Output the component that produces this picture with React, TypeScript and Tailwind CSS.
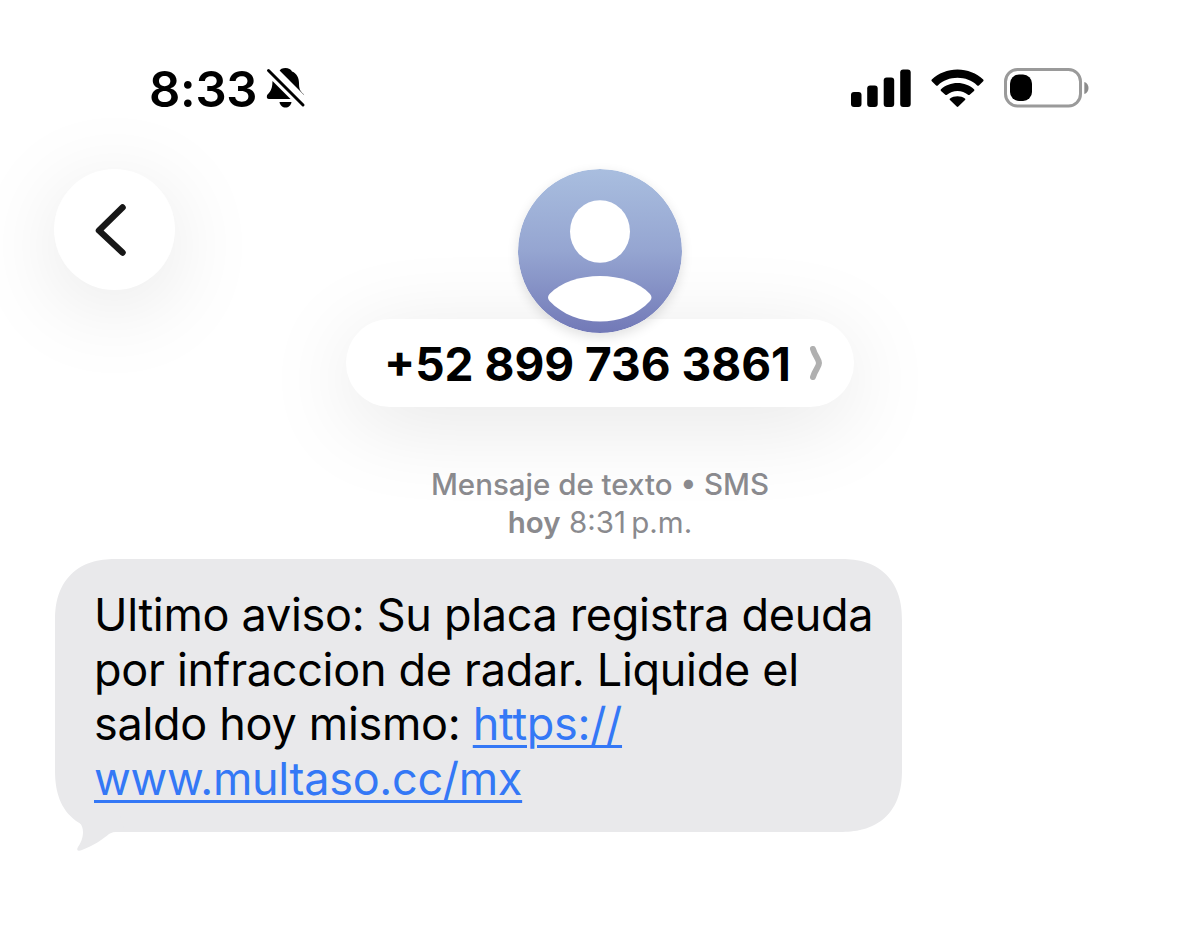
import React from "react";

const SilentIcon: React.FC = () => (
  <svg width="40" height="42" viewBox="0 0 40 42" fill="black">
    <path d="M13 4.5C14 2 16.500 1 19.500 1C22.500 1 25 2.200 26 4.500C31 6.500 33 11 33 16C33 22 34 24 37.500 27L38.500 30L11 2.500Z" />
    <path d="M6.500 14L24.500 32H3C1 32 0.500 30.500 1 28.500C1.500 26.500 6.500 25 6.500 14Z" />
    <path d="M13.500 35H25.500C25 38.500 22.500 40.500 19.500 40.500C16.500 40.500 14 38.500 13.500 35Z" />
    <path d="M10 2L39 31" stroke="white" strokeWidth="3" />
    <path d="M2.500 3.500L37 38" stroke="black" strokeWidth="3" strokeLinecap="round" />
  </svg>
);

const SignalIcon: React.FC = () => (
  <svg width="60" height="38" viewBox="0 0 60 38" fill="black">
    <rect x="0" y="23" width="10.500" height="15" rx="3" />
    <rect x="16.200" y="16.500" width="10.500" height="21.500" rx="3" />
    <rect x="32.700" y="8.500" width="10.500" height="29.500" rx="3" />
    <rect x="49.200" y="0.500" width="10.500" height="37.500" rx="3" />
  </svg>
);

const WifiIcon: React.FC = () => (
  <svg width="53" height="38" viewBox="0 0 53 38" fill="black">
    <path d="M26.500 0.500C36.500 0.500 45.500 4.300 52.200 10.500C52.700 11 52.700 11.700 52.200 12.200L47.900 16.400C47.400 16.900 46.700 16.900 46.200 16.400C40.800 11.500 34 8.800 26.500 8.800C19 8.800 12.200 11.500 6.800 16.400C6.300 16.900 5.600 16.900 5.100 16.400L0.800 12.200C0.300 11.700 0.300 11 0.800 10.500C7.500 4.300 16.500 0.500 26.500 0.500Z" />
    <path d="M26.500 14C32.900 14 38.600 16.300 43 20.200C43.500 20.700 43.500 21.400 43 21.900L38.700 25.800C38.200 26.200 37.500 26.200 37 25.800C34.100 23.500 30.500 22 26.500 22C22.500 22 18.900 23.500 16 25.800C15.500 26.200 14.800 26.200 14.300 25.800L10 21.900C9.500 21.400 9.500 20.700 10 20.200C14.400 16.300 20.100 14 26.500 14Z" />
    <path d="M26.500 27.300C29.300 27.300 31.900 28.100 33.900 29.500C34.500 29.900 34.500 30.600 34 31.100L27.300 37.500C26.800 38 26.200 38 25.700 37.500L19 31.100C18.500 30.600 18.500 29.900 19.100 29.500C21.100 28.100 23.700 27.300 26.500 27.300Z" />
  </svg>
);

const BatteryIcon: React.FC = () => (
  <svg width="86" height="40" viewBox="0 0 86 40">
    <rect x="1.500" y="1.500" width="75" height="36.500" rx="12" fill="none" stroke="#9a9a9a" strokeWidth="3" />
    <rect x="6" y="6.500" width="22" height="26.500" rx="9" fill="black" />
    <path d="M80.300 14C83 14.800 84.500 17 84.500 20C84.500 23 83 25.200 80.300 26Z" fill="#8c8c8c" />
  </svg>
);

const StatusBar: React.FC = () => (
  <div className="flex h-[169px] items-start justify-between pt-[58px] pr-[110px] pl-[149px]">
    <div className="flex h-[60px] items-center gap-[11px]">
      <span className="w-[106px] pt-[3px] text-[49px] leading-[60px] font-semibold tracking-[-0.3px] whitespace-nowrap">
        8:33
      </span>
      <SilentIcon />
    </div>
    <div className="flex h-[60px] items-center">
      <SignalIcon />
      <div className="ml-[20px]">
        <WifiIcon />
      </div>
      <div className="ml-[20px]">
        <BatteryIcon />
      </div>
    </div>
  </div>
);

const Avatar: React.FC = () => (
  <svg
    width="164"
    height="164"
    viewBox="0 0 164 164"
    className="relative z-10 rounded-full shadow-[0_4px_12px_rgba(0,0,0,0.12)]"
  >
    <defs>
      <linearGradient id="avatar" x1="0" y1="0" x2="0" y2="1">
        <stop offset="0" stopColor="#a9bedf" />
        <stop offset="0.5" stopColor="#95a5d1" />
        <stop offset="1" stopColor="#7279b7" />
      </linearGradient>
    </defs>
    <circle cx="82" cy="82" r="82" fill="url(#avatar)" />
    <ellipse cx="82" cy="62.500" rx="30" ry="31.300" fill="white" />
    <path
      d="M31.500 125C43 113 62 107 82 107C102 107 121 113 132 125C134 127.500 134 129.500 132 132C119 146 101 152.500 82 152.500C63 152.500 45 146 31.500 132C29.500 129.500 29.500 127.500 31.500 125Z"
      fill="white"
    />
  </svg>
);

const ConversationHeader: React.FC = () => (
  <header className="flex items-start gap-[171px] pl-[54px]">
    <button className="flex h-[121px] w-[121px] items-center justify-center rounded-full bg-white pr-[8px] shadow-[0_16px_90px_rgba(0,0,0,0.1)]">
      <svg width="34" height="54" viewBox="0 0 34 54" fill="none">
        <path
          d="M28.500 4.500L5 27.500L28.500 49.500"
          stroke="#171717"
          strokeWidth="6.500"
          strokeLinecap="round"
          strokeLinejoin="round"
        />
      </svg>
    </button>
    <div className="flex w-[508px] flex-col items-center">
      <Avatar />
      <div className="-mt-[14px] flex h-[88px] w-full items-center rounded-full bg-white pl-[38px] shadow-[0_16px_90px_rgba(0,0,0,0.1)]">
        <span className="w-[424px] pt-[2px] text-[46px] leading-[56px] font-bold whitespace-nowrap">
          +52 899 736 3861
        </span>
        <svg width="16" height="36" viewBox="0 0 16 36" fill="none">
          <path
            d="M5 4C7 11 11 14 11 18C11 22 7 25 5 32"
            stroke="#b0b0b0"
            strokeWidth="6"
            strokeLinecap="round"
          />
        </svg>
      </div>
    </div>
  </header>
);

const MessageBubble: React.FC = () => (
  <div className="relative mt-[18px] ml-[55px] h-[273px] w-[847px] rounded-[62px] bg-[#e9e9eb] pt-[29px] pl-[39px] text-[45px] leading-[54.5px] whitespace-nowrap [corner-shape:superellipse(1.25)]">
    <svg
      width="60"
      height="40"
      viewBox="0 0 60 40"
      className="absolute top-[253px] left-[14px]"
    >
      <path
        d="M0 0C10 10 14 12 14 20C14 27 11 32 9 35C7 38.500 9 39.500 13 38C24 34 34 27 40 22C43 20.300 45 20 49 20L56 20L50 0Z"
        fill="#e9e9eb"
      />
    </svg>
    <p className="tracking-[-0.3px]">Ultimo aviso: Su placa registra deuda</p>
    <p className="tracking-[-0.3px]">por infraccion de radar. Liquide el</p>
    <p className="tracking-[-0.3px]">
      saldo hoy mismo:{" "}
      <a className="text-[#3478f6] underline decoration-[3px] underline-offset-[5px]">
        https://
      </a>
    </p>
    <p className="tracking-[-0.3px]">
      <a className="text-[#3478f6] underline decoration-[3px] underline-offset-[5px]">
        www.multaso.cc/mx
      </a>
    </p>
  </div>
);

export default function App() {
  return (
    <div className="flex h-[930px] w-[1200px] flex-col overflow-hidden bg-white font-['Inter','Liberation_Sans',sans-serif] text-black">
      <StatusBar />
      <ConversationHeader />
      <div className="mt-[58px] flex flex-col items-center text-[29.5px] leading-[38px] text-[#8a8a8e]">
        <p className="font-medium whitespace-nowrap">Mensaje de texto • SMS</p>
        <p className="whitespace-nowrap">
          <span className="font-semibold">hoy</span> 8:31{"\u2009"}p.m.
        </p>
      </div>
      <MessageBubble />
    </div>
  );
}
